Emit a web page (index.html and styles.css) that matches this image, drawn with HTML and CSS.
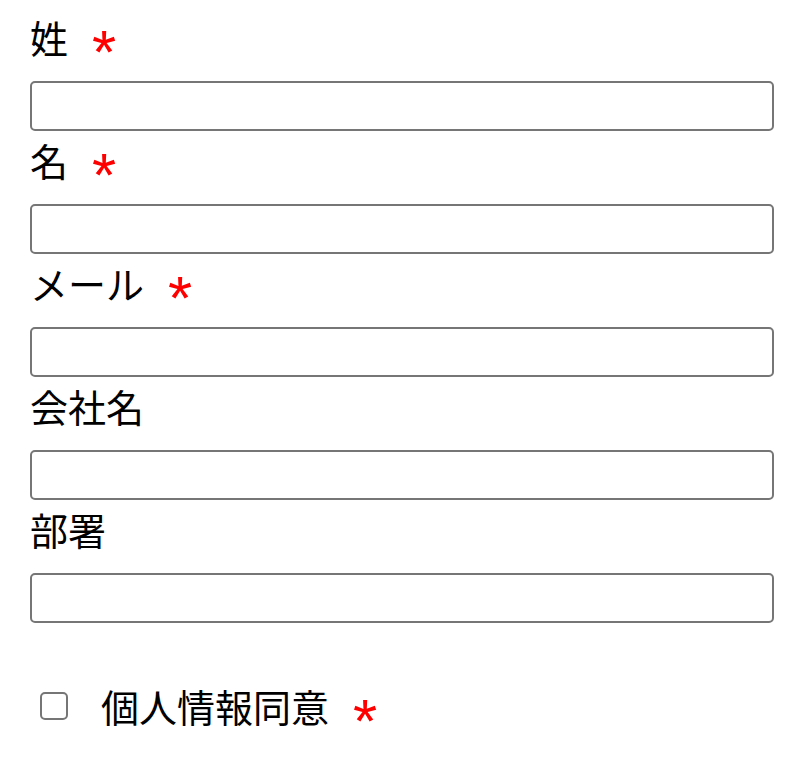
FILE: index.html
```html
<!DOCTYPE html>
<html lang="ja">

<head>
    <meta charset="UTF-8">
    <meta name="viewport" content="width=device-width, initial-scale=1.0">
    <title>お問い合わせ</title>
    <link rel="stylesheet" href="styles.css">
</head>

<body>
    <form id="contactForm">
        <div class="form__group">
            <label for="lastName" class="form__label">姓<span class="required">*</span></label>
            <input type="text" class="form__field" id="lastName" name="lastName" required>
        </div>

        <div class="form__group">
            <label for="firstName" class="form__label">名<span class="required">*</span></label>
            <input type="text" class="form__field" id="firstName" name="firstName" required>
        </div>

        <div class="form__group">
            <label for="email" class="form__label">メール<span class="required">*</span></label>
            <input type="email" class="form__field" id="email" name="email" required>
        </div>

        <div class="form__group">
            <label for="company" class="form__label">会社名</label>
            <input type="text" class="form__field" id="company" name="company">
        </div>

        <div class="form__group">
            <label for="department" class="form__label">部署</label>
            <input type="text" class="form__field" id="department" name="department">
        </div>

        <div class="form__agree">
            <input type="checkbox" class="form__check" id="agree" name="agree" required>
            <label for="agree" class="form__label">個人情報同意<span class="required">*</span></label>
        </div>
    </form>
</body>

</html>
```

FILE: styles.css
```css
body {
    margin: 0;
    padding: 8px 26px 0 30px;
    background-color: #ffffff;
    color: #000000;
    font-family: "Noto Sans CJK JP", "Noto Sans", sans-serif;
}

.form__group {
    display: flex;
    flex-direction: column;
}

.form__label {
    display: block;
    font-size: 38px;
    line-height: 57px;
    margin-bottom: 16px;
}

/* red mark for required fields */
.required {
    color: #ff0000;
    font-family: "Liberation Sans", Arial, sans-serif;
    font-size: 62px;
    font-weight: 400;
    line-height: 0;
    vertical-align: -20px;
    margin-left: 24px;
}

.form__field {
    box-sizing: border-box;
    width: 100%;
    height: 50px;
    margin: 0;
    border: 2px solid #767676;
    border-radius: 5px;
    background: #ffffff;
    outline: 0;
    font-size: 26px;
    padding: 0 8px;
}

/* checkbox row */
.form__agree {
    display: flex;
    align-items: center;
    margin-top: 54px;
    padding-left: 10px;
}

.form__agree .form__label {
    margin: 0;
}

.form__check {
    appearance: none;
    -webkit-appearance: none;
    box-sizing: border-box;
    width: 28px;
    height: 28px;
    margin: 0 33px 0 0;
    border: 2px solid #767676;
    border-radius: 5px;
    background: #ffffff;
}
```
